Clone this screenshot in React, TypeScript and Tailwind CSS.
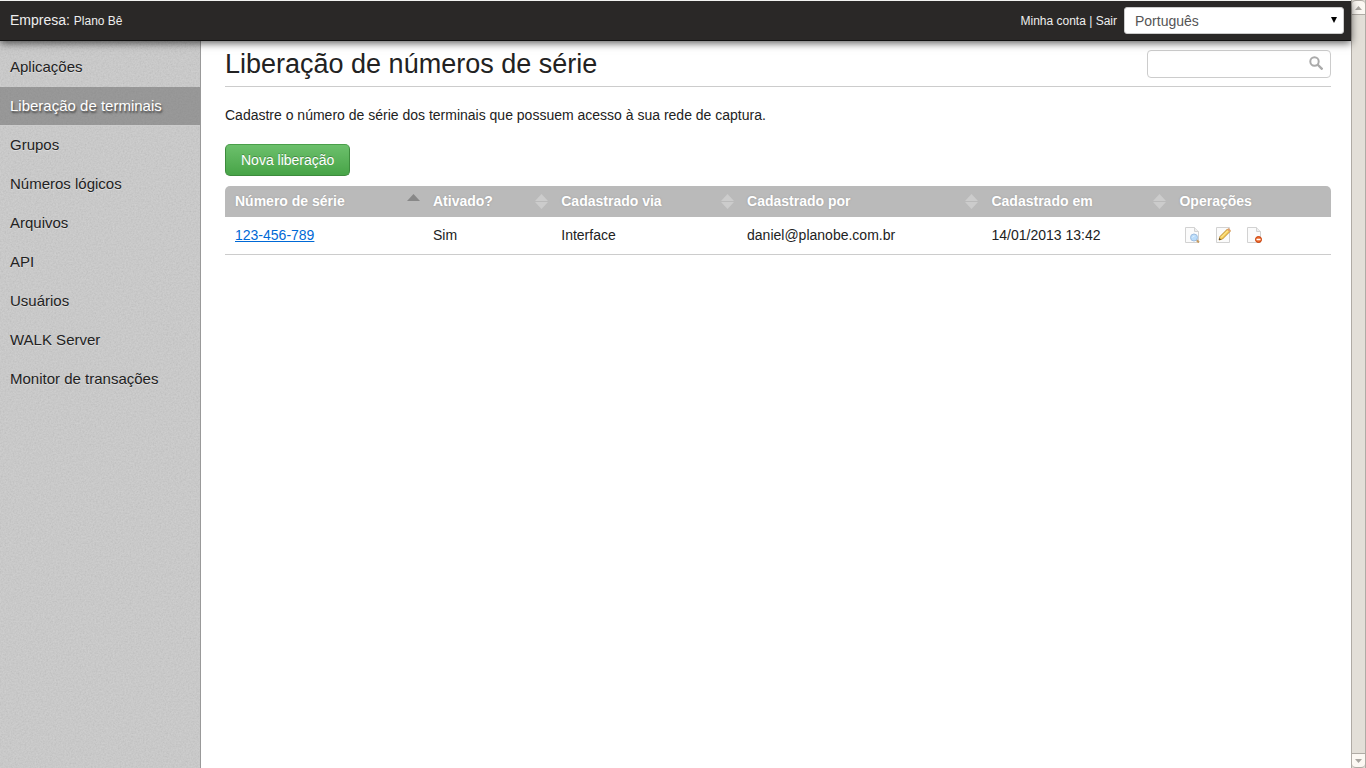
import React from "react";

const menu = [
  "Aplicações",
  "Liberação de terminais",
  "Grupos",
  "Números lógicos",
  "Arquivos",
  "API",
  "Usuários",
  "WALK Server",
  "Monitor de transações",
];

const columns = [
  { label: "Número de série", width: "w-[17.9%]", sort: "asc" },
  { label: "Ativado?", width: "w-[11.6%]", sort: "both" },
  { label: "Cadastrado via", width: "w-[16.8%]", sort: "both" },
  { label: "Cadastrado por", width: "w-[22.1%]", sort: "both" },
  { label: "Cadastrado em", width: "w-[17%]", sort: "both" },
  { label: "Operações", width: "w-[14.6%]", sort: "none" },
];

function SortIcon({ sort }: { sort: string }) {
  if (sort === "none") return null;
  return (
    <svg width="13" height="15" viewBox="0 0 13 15" className="shrink-0" aria-hidden="true">
      {sort === "asc" ? (
        <path d="M6.5 0 13 7H0z" fill="#888" />
      ) : (
        <path d="M6.5 0 13 7H0zM0 8h13l-6.500 7z" fill="#ccc" />
      )}
    </svg>
  );
}

function Page() {
  return (
    <>
      <path d="M1.500.5h9l4 4v11h-13z" fill="#fbfbfb" stroke="#d2d2d2" />
      <path d="M10.500.5v4h4" fill="#eee" stroke="#d2d2d2" />
    </>
  );
}

function ViewIcon() {
  return (
    <svg width="16" height="16" viewBox="0 0 16 16" aria-hidden="true">
      <Page />
      <path d="m12.500 13 2.500 2.500" stroke="#c69c62" strokeWidth="2" />
      <circle cx="10" cy="10.500" r="3.500" fill="#b9dcfb" stroke="#9dbde0" />
      <path d="M8.500 10.500a2 2 0 0 1 2-1.500" fill="none" stroke="#e6f4ff" />
    </svg>
  );
}

function EditIcon() {
  return (
    <svg width="16" height="16" viewBox="0 0 16 16" aria-hidden="true">
      <path d="M1.500.5h13v15h-13z" fill="#fbfbfb" stroke="#d2d2d2" />
      <path d="m4 13 1-3.500L12.500 2 15 4.500 7.500 12z" fill="#f7cf58" stroke="#c08f32" />
      <path d="m6 10.500 7-7" stroke="#fff0a8" />
      <path d="M12 2.500 13.500 1 16 3.500 14.500 5z" fill="#e0a06d" />
      <path d="m4 13 .5-2 1.500 1.500z" fill="#333" />
    </svg>
  );
}

function DeleteIcon() {
  return (
    <svg width="16" height="16" viewBox="0 0 16 16" aria-hidden="true">
      <Page />
      <circle cx="12.500" cy="12.500" r="3" fill="#ee6a2c" stroke="#c63c05" />
      <path d="M10.500 12.500h4" stroke="#fff" strokeWidth="1.500" />
    </svg>
  );
}

function Noise() {
  return (
    <svg className="pointer-events-none absolute inset-0 h-full w-full" aria-hidden="true">
      <filter id="grain">
        <feTurbulence type="fractalNoise" baseFrequency="0.6" numOctaves="3" stitchTiles="stitch" />
        <feColorMatrix values="0.900 0 0 0 0.150  0.900 0 0 0 0.150  0.900 0 0 0 0.150  0 0 0 0 0.150" />
      </filter>
      <rect width="100%" height="100%" filter="url(#grain)" />
    </svg>
  );
}

function ScrollBar() {
  return (
    <div className="flex w-[15px] shrink-0 flex-col justify-between border-x border-[#b0aba5] bg-[#e3dfd8]" aria-hidden="true">
      <div className="flex h-[15px] items-center justify-center rounded-t-sm border-y border-[#b0aba5] bg-[#fcf8f3]">
        <svg width="7" height="4"><path d="M3.500 0 7 4H0z" fill="#aaa6a1" /></svg>
      </div>
      <div className="flex h-[15px] items-center justify-center rounded-b-sm border-y border-[#b0aba5] bg-[#fcf8f3]">
        <svg width="7" height="4"><path d="M0 0h7L3.500 4z" fill="#aaa6a1" /></svg>
      </div>
    </div>
  );
}

export default function App() {
  return (
    <div className="flex min-h-screen bg-white font-['Liberation_Sans',Arial,sans-serif] text-sm text-[#222]">
      <div className="flex min-w-0 grow flex-col">
        <header className="relative z-10 flex h-[41px] shrink-0 items-center justify-between border-t border-b border-t-[#f2f2f0] border-b-[#111] bg-[#2a2827] pr-[7px] pl-[10px] text-[#eee] shadow-[0_2px_8px_rgba(0,0,0,0.65)]">
          <p className="pb-[2px]">
            Empresa: <span className="text-xs">Plano Bê</span>
          </p>
          <div className="flex items-center gap-[7px]">
            <nav className="text-xs">
              <a href="#conta">Minha conta</a> | <a href="#sair">Sair</a>
            </nav>
            <div className="relative">
              <select
                aria-label="Idioma"
                className="block h-[27px] w-[220px] appearance-none rounded-[3px] border border-[#ccc] bg-white px-[10px] text-sm text-[#555]"
              >
                <option>Português</option>
              </select>
              <svg width="6" height="6" className="pointer-events-none absolute top-[10px] right-[7px]" aria-hidden="true">
                <path d="M0 0h6L3 6z" fill="#000" />
              </svg>
            </div>
          </div>
        </header>

        <div className="flex grow">
          <aside className="relative w-[201px] shrink-0 border-r border-[#999] bg-[#c8c8c8] pt-[7px]">
            <Noise />
            <nav className="relative">
              {menu.map((item, i) => (
                <a
                  key={item}
                  href="#"
                  aria-current={i === 1 ? "page" : undefined}
                  className={
                    i === 1
                      ? "block h-[39px] border-b border-[#ccc] bg-[#666]/50 px-[10px] text-[15px] leading-[38px] text-white [text-shadow:1px_2px_2px_#444]"
                      : "block h-[39px] px-[10px] text-[15px] leading-[38px] [text-shadow:0_1px_0_#ddd]"
                  }
                >
                  {item}
                </a>
              ))}
            </nav>
          </aside>

          <main className="min-w-0 grow px-5 pl-6">
            <div className="flex items-start justify-between border-b border-[#ccc] pt-[9px] pb-2">
              <h1 className="text-[27px] leading-[28px]">Liberação de números de série</h1>
              <div className="relative">
                <input
                  type="search"
                  aria-label="Buscar"
                  className="block h-[28px] w-[184px] rounded-[4px] border border-[#ccc] bg-white pr-7 pl-2 outline-none"
                />
                <svg width="14" height="14" viewBox="0 0 14 14" className="pointer-events-none absolute top-[6px] right-2" fill="none" stroke="#aaa" aria-hidden="true">
                  <circle cx="5.500" cy="5.500" r="4.200" strokeWidth="2" />
                  <path d="m8.500 8.500 5 5" strokeWidth="2.400" />
                </svg>
              </div>
            </div>

            <p className="mt-[18px] leading-5">
              Cadastre o número de série dos terminais que possuem acesso à sua rede de captura.
            </p>

            <button
              type="button"
              className="mt-[19px] block h-8 rounded-[5px] border border-[#3d8b3d] border-t-[#4a9f4a] bg-linear-to-b from-[#6cc06c] to-[#47a447] px-[15px] text-white [text-shadow:0_-1px_0_rgba(0,0,0,0.25)]"
            >
              Nova liberação
            </button>

            <table className="mt-[10px] w-full table-fixed border-separate border-spacing-0 text-left">
              <thead>
                <tr>
                  {columns.map((c) => (
                    <th
                      key={c.label}
                      scope="col"
                      className={`${c.width} h-[31px] bg-[#bababa] pr-[3px] pl-[10px] text-white first:rounded-tl-[5px] last:rounded-tr-[5px] [text-shadow:0_0_2px_#999]`}
                    >
                      <div className="flex items-center justify-between">
                        <span className="pb-[2px]">{c.label}</span>
                        <SortIcon sort={c.sort} />
                      </div>
                    </th>
                  ))}
                </tr>
              </thead>
              <tbody>
                <tr className="[&>td]:h-[38px] [&>td]:border-b [&>td]:border-[#ccc] [&>td]:px-[10px] [&>td]:pb-[2px]">
                  <td>
                    <a href="#serie" className="text-[#0069d6] underline">123-456-789</a>
                  </td>
                  <td>Sim</td>
                  <td>Interface</td>
                  <td>daniel@planobe.com.br</td>
                  <td>14/01/2013 13:42</td>
                  <td>
                    <div className="flex gap-[15px] pl-[5px]">
                      <button type="button" aria-label="Visualizar"><ViewIcon /></button>
                      <button type="button" aria-label="Editar"><EditIcon /></button>
                      <button type="button" aria-label="Excluir"><DeleteIcon /></button>
                    </div>
                  </td>
                </tr>
              </tbody>
            </table>
          </main>
        </div>
      </div>
      <ScrollBar />
    </div>
  );
}
